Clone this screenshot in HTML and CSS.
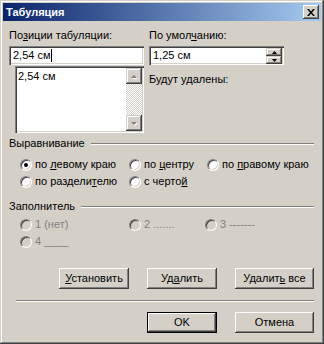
FILE: index.html
```html
<!DOCTYPE html>
<html lang="ru">
<head>
    <meta charset="UTF-8">
    <title>Табуляция</title>
    <link rel="stylesheet" href="styles.css">
</head>
<body>
    <div class="window">
        <div class="titlebar">
            <span class="title">Табуляция</span>
            <div class="close">
                <svg width="8" height="7" viewBox="0 0 8 7"><path d="M0 0h2l2 2.4L6 0h2L5 3.5 8 7H6L4 4.6 2 7H0l3-3.5z" fill="#000"/></svg>
            </div>
        </div>
        <div class="content">
            <div class="top">
                <div class="col">
                    <div class="label">По<u>з</u>иции табуляции:</div>
                    <div class="field">2,54 см<span class="caret"></span></div>
                    <div class="list">
                        <div class="list-items">
                            <div class="item">2,54 см</div>
                        </div>
                        <div class="scrollbar">
                            <div class="sbtn">
                                <svg width="8" height="5" viewBox="0 0 8 5"><path d="M4 1 7 4H1z" fill="#fff" transform="translate(1 1)"/><path d="M4 0 7 3H1z" fill="#808080" transform="translate(0 1)"/></svg>
                            </div>
                            <div class="track"></div>
                            <div class="sbtn">
                                <svg width="8" height="5" viewBox="0 0 8 5"><path d="M1 1h6L4 4z" fill="#fff" transform="translate(1 1)"/><path d="M1 1h6L4 4z" fill="#808080"/></svg>
                            </div>
                        </div>
                    </div>
                </div>
                <div class="col">
                    <div class="label">По умол<u>ч</u>анию:</div>
                    <div class="field spin">
                        <span class="spin-text">1,25 см</span>
                        <div class="spin-btns">
                            <div class="spin-btn"><svg width="5" height="3" viewBox="0 0 5 3"><path d="M2.5 0 5 3H0z" fill="#000"/></svg></div>
                            <div class="spin-btn"><svg width="5" height="3" viewBox="0 0 5 3"><path d="M0 0h5L2.5 3z" fill="#000"/></svg></div>
                        </div>
                    </div>
                    <div class="label removed">Будут удалены:</div>
                </div>
            </div>

            <div class="group">
                <div class="group-head"><span>Выравнивание</span><div class="etch"></div></div>
                <div class="radios">
                    <div class="radio"><span class="dot checked"></span><span>по <u>л</u>евому краю</span></div>
                    <div class="radio"><span class="dot"></span><span>по <u>ц</u>ентру</span></div>
                    <div class="radio"><span class="dot"></span><span>по <u>п</u>равому краю</span></div>
                    <div class="radio"><span class="dot"></span><span>по раздели<u>т</u>елю</span></div>
                    <div class="radio"><span class="dot"></span><span>с черто<u>й</u></span></div>
                </div>
            </div>

            <div class="group fill">
                <div class="group-head"><span>Заполнитель</span><div class="etch"></div></div>
                <div class="radios disabled">
                    <div class="radio"><span class="dot"></span><span>1 (нет)</span></div>
                    <div class="radio"><span class="dot"></span><span>2 .......</span></div>
                    <div class="radio"><span class="dot"></span><span>3 -------</span></div>
                    <div class="radio"><span class="dot"></span><span>4 ____</span></div>
                </div>
            </div>

            <div class="buttons">
                <div class="btn"><span><u>У</u>становить</span></div>
                <div class="btn"><span>Уд<u>а</u>лить</span></div>
                <div class="btn wide"><span>Удалит<u>ь</u> все</span></div>
            </div>
            <div class="separator"></div>
            <div class="buttons ok-row">
                <div class="btn default">OK</div>
                <div class="btn wide">Отмена</div>
            </div>
        </div>
    </div>
</body>
</html>
```

FILE: styles.css
```css
body {
    margin: 0;
    background-color: #d4d0c8;
    font-family: "Liberation Sans", Arial, sans-serif;
    font-size: 11px;
    line-height: 13px;
    color: #000;
}
.window {
    width: 324px;
    height: 344px;
    box-sizing: border-box;
    padding: 3px;
    background-color: #d4d0c8;
    box-shadow: inset -1px -1px #404040, inset 1px 1px #d4d0c8, inset -2px -2px #808080, inset 2px 2px #fff;
}
.titlebar {
    height: 18px;
    display: flex;
    align-items: center;
    justify-content: space-between;
    padding: 0 2px 0 3px;
    background: linear-gradient(to right, #0a246a, #a6caf0);
}
.title {
    color: #fff;
    font-weight: bold;
    font-size: 11px;
}
.close {
    width: 16px;
    height: 14px;
    box-sizing: border-box;
    display: flex;
    align-items: center;
    justify-content: center;
    background-color: #d4d0c8;
    box-shadow: inset -1px -1px #404040, inset 1px 1px #fff, inset -2px -2px #808080;
}
.content {
    padding: 8px 7px 0 6px;
}
.top {
    display: flex;
    gap: 5px;
}
.col {
    width: 135px;
}
.label {
    height: 13px;
    margin-bottom: 4px;
}
.field {
    height: 19px;
    box-sizing: border-box;
    padding: 3px 3px 0 4px;
    background-color: #fff;
    box-shadow: inset 1px 1px #808080, inset 2px 2px #404040, inset -1px -1px #fff, inset -2px -2px #d4d0c8;
    white-space: nowrap;
}
.caret {
    display: inline-block;
    width: 1px;
    height: 13px;
    background-color: #000;
    vertical-align: top;
}
.list {
    display: flex;
    margin: 1px 0 0 6px;
    height: 67px;
    box-sizing: border-box;
    padding: 2px;
    background-color: #fff;
    box-shadow: inset 1px 1px #808080, inset 2px 2px #404040, inset -1px -1px #fff, inset -2px -2px #d4d0c8;
}
.list-items {
    flex: 1;
    padding: 2px 0 0 1px;
}
.scrollbar {
    width: 16px;
    display: flex;
    flex-direction: column;
}
.sbtn, .spin-btn {
    display: flex;
    align-items: center;
    justify-content: center;
    background-color: #d4d0c8;
    box-shadow: inset -1px -1px #404040, inset 1px 1px #d4d0c8, inset -2px -2px #808080, inset 2px 2px #fff;
}
.sbtn {
    height: 16px;
}
.track {
    flex: 1;
    background: repeating-conic-gradient(#d4d0c8 0 25%, #fff 0 50%) 0 0 / 2px 2px;
}
.spin {
    display: flex;
    justify-content: space-between;
    padding-right: 2px;
}
.spin-btns {
    display: flex;
    flex-direction: column;
    width: 16px;
    margin-top: -1px;
}
.spin-btn {
    height: 8px;
}
.removed {
    margin-top: 8px;
}
.group {
    margin-top: 4px;
}
.group-head {
    display: flex;
    align-items: center;
    height: 13px;
}
.etch {
    flex: 1;
    height: 0;
    margin-left: 6px;
    border-top: 1px solid #808080;
    border-bottom: 1px solid #fff;
}
.radios {
    display: grid;
    grid-template-columns: 109px 78px auto;
    grid-auto-rows: 17px;
    margin-top: 6px;
    padding-left: 11px;
}
.radio {
    display: flex;
    align-items: center;
    white-space: nowrap;
}
.dot {
    width: 12px;
    height: 12px;
    box-sizing: border-box;
    margin-right: 3px;
    border-radius: 50%;
    border: 1px solid;
    border-color: #808080 #fff #fff #808080;
    background-color: #fff;
    box-shadow: inset 1px 1px #404040, inset -1px -1px #d4d0c8;
    position: relative;
}
.dot.checked::after {
    content: "";
    position: absolute;
    left: 3px;
    top: 3px;
    width: 4px;
    height: 4px;
    border-radius: 50%;
    background-color: #000;
}
.fill {
    margin-top: 10px;
}
.fill .radios {
    margin-top: 3px;
    grid-template-columns: 109px 76px auto;
}
.disabled .radio {
    color: #808080;
}
.disabled .dot {
    background-color: #d4d0c8;
}
.buttons {
    display: flex;
    justify-content: flex-end;
    gap: 18px;
    margin-top: 18px;
}
.btn {
    width: 70px;
    height: 21px;
    box-sizing: border-box;
    display: flex;
    align-items: center;
    justify-content: center;
    background-color: #d4d0c8;
    box-shadow: inset -1px -1px #404040, inset 1px 1px #fff, inset -2px -2px #808080, inset 2px 2px #d4d0c8;
}
.btn.wide {
    width: 79px;
}
.btn.default {
    border: 1px solid #000;
}
.separator {
    margin: 11px 0 0 7px;
    border-top: 1px solid #808080;
    border-bottom: 1px solid #fff;
}
.ok-row {
    margin-top: 10px;
}
```
